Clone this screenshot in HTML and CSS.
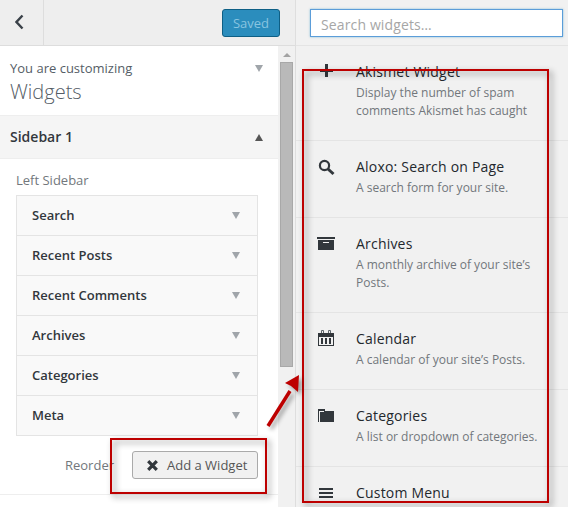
FILE: index.html
```html
<!DOCTYPE html>
<html lang="en">
<head>
<meta charset="utf-8">
<title>Widgets</title>
<link rel="stylesheet" href="styles.css">
</head>
<body>
<div class="app">
  <aside class="side">
    <header class="top">
      <button class="back" aria-label="Back">
        <svg width="12" height="16" viewBox="0 0 12 16"><path d="M7.5 1.500 1.500 8l6 6.500" fill="none" stroke="#3a4149" stroke-width="2.400"/></svg>
      </button>
      <button class="saved">Saved</button>
    </header>
    <div class="scrollwrap">
      <div class="content">
        <section class="info">
          <div class="info-text">
            <div class="info-small">You are customizing</div>
            <div class="info-big">Widgets</div>
          </div>
          <span class="tri tri-down"></span>
        </section>
        <section class="sec-head">
          <h3>Sidebar 1</h3>
          <span class="tri tri-up"></span>
        </section>
        <section class="sec-body">
          <p class="sec-desc">Left Sidebar</p>
          <ul class="wlist">
            <li><span class="wname">Search</span><span class="tri tri-down"></span></li>
            <li><span class="wname">Recent Posts</span><span class="tri tri-down"></span></li>
            <li><span class="wname">Recent Comments</span><span class="tri tri-down"></span></li>
            <li><span class="wname">Archives</span><span class="tri tri-down"></span></li>
            <li><span class="wname">Categories</span><span class="tri tri-down"></span></li>
            <li><span class="wname">Meta</span><span class="tri tri-down"></span></li>
          </ul>
          <div class="actions">
            <span class="reorder">Reorder</span>
            <button class="add">
              <svg width="13" height="13" viewBox="0 0 13 13"><path d="M2.200 2.200l8.600 8.600M10.800 2.200l-8.600 8.600" stroke="#32373c" stroke-width="3.200" fill="none"/></svg>
              Add a Widget
            </button>
          </div>
        </section>
      </div>
      <div class="scrollbar">
        <span class="sb-up"></span>
        <span class="sb-thumb"></span>
      </div>
    </div>
  </aside>
  <main class="avail">
    <div class="search-row"><input class="search" placeholder="Search widgets…"></div>
    <div class="item">
      <svg class="ico" width="20" height="24" viewBox="0 0 20 24"><path d="M9 3h3v5h5v3h-5v5H9v-5H4V8h5z" fill="#32373c"/></svg>
      <div class="item-text"><h4>Akismet Widget</h4><p>Display the number of spam comments Akismet has caught</p></div>
    </div>
    <div class="item">
      <svg class="ico" width="20" height="24" viewBox="0 0 20 24"><circle cx="8.500" cy="9.500" r="4.600" fill="none" stroke="#32373c" stroke-width="2.200"/><path d="M12 13l5.500 5" stroke="#32373c" stroke-width="3"/></svg>
      <div class="item-text"><h4>Aloxo: Search on Page</h4><p>A search form for your site.</p></div>
    </div>
    <div class="item">
      <svg class="ico" width="20" height="24" viewBox="0 0 20 24"><path d="M1 4h18v2H1zM2 7h16v10H2zM7 9v1h6V9z" fill="#32373c" fill-rule="evenodd"/></svg>
      <div class="item-text"><h4>Archives</h4><p>A monthly archive of your site’s Posts.</p></div>
    </div>
    <div class="item">
      <svg class="ico" width="20" height="24" viewBox="0 0 20 24"><path d="M2 5h16v13H2zM3 9v8h14V9zM5 10h2v6H5zM9 10h2v6H9zM13 10h2v6h-2z" fill="#32373c" fill-rule="evenodd"/><path d="M5.500 5V2.500h2V5M12.500 5V2.500h2V5" fill="none" stroke="#5f666c"/></svg>
      <div class="item-text"><h4>Calendar</h4><p>A calendar of your site’s Posts.</p></div>
    </div>
    <div class="item">
      <svg class="ico" width="20" height="24" viewBox="0 0 20 24"><path d="M2 4h7v2h9v11H2zM3 6v11h1V7h4V6z" fill="#32373c" fill-rule="evenodd"/></svg>
      <div class="item-text"><h4>Categories</h4><p>A list or dropdown of categories.</p></div>
    </div>
    <div class="item">
      <svg class="ico" width="20" height="24" viewBox="0 0 20 24"><path d="M3 6h14v2H3zM3 10h14v2H3zM3 14h14v2H3z" fill="#32373c"/></svg>
      <div class="item-text"><h4>Custom Menu</h4></div>
    </div>
  </main>
</div>
<div class="note note-list"></div>
<div class="note note-add"></div>
<svg class="arrow" width="50" height="70" viewBox="0 0 50 70"><path d="M2 57 24 22" class="arrow-line"/><path d="M33 6 19 14 25 17 32 23z" class="arrow-head"/></svg>
</body>
</html>
```
FILE: styles.css
```css
* { box-sizing: border-box; }
html, body { margin: 0; height: 507px; overflow: hidden; }
body { font-family: "Open Sans", sans-serif; color: #32373c; position: relative; background: #f1f1f1; }
.app { display: flex; height: 507px; overflow: hidden; }
.side { width: 296px; flex: none; border-right: 1px solid #dedede; display: flex; flex-direction: column; background: #eee; }
.top { height: 46px; flex: none; display: flex; justify-content: space-between; align-items: flex-start; border-bottom: 1px solid #ddd; padding-right: 15px; }
.back { width: 44px; height: 45px; border: 0; border-right: 1px solid #ddd; background: transparent; padding: 0 1px 2px 0; display: flex; align-items: center; justify-content: center; }
.saved { margin-top: 9px; width: 58px; height: 28px; border: 1px solid #0e5f85; border-radius: 3px; background: #2b8dbd; color: #88c4e0; font: 13px "Open Sans", sans-serif; padding: 0; }
.scrollwrap { flex: 1; display: flex; min-height: 0; }
.content { width: 278px; flex: none; background: #fff; }
.info { height: 70px; padding: 13px 16px 0 10px; display: flex; justify-content: space-between; border-bottom: 1px solid #eee; }
.info-small { font-size: 13px; line-height: 18px; color: #555d66; }
.info-big { font-size: 20px; font-weight: 300; line-height: 28px; margin-top: 1px; color: #555d66; }
.tri { display: block; width: 0; height: 0; border-left: 4.500px solid transparent; border-right: 4.500px solid transparent; }
.tri-down { border-top: 7px solid #a0a5aa; }
.info .tri { margin-top: 6px; margin-right: -1px; }
.sec-head { height: 43px; padding: 0 16px 0 10px; display: flex; justify-content: space-between; align-items: center; background: #f5f5f5; border-bottom: 1px solid #eee; }
.sec-head h3 { margin: 0 0 2px; font-size: 14px; font-weight: 600; color: #32373c; }
.tri-up { border-bottom: 7px solid #555; margin-right: -1px; }
.sec-body { padding: 0 20px 0 16px; height: 336px; border-bottom: 1px solid #eee; }
.sec-desc { margin: 0; padding-top: 11px; height: 36px; line-height: 20px; font-size: 13px; color: #72777c; }
.wlist { list-style: none; margin: 0; padding: 0; border: 1px solid #e4e4e4; border-bottom: 0; }
.wlist li { height: 40px; display: flex; align-items: center; justify-content: space-between; padding: 0 17px 0 15px; background: #f9f9f9; border-bottom: 1px solid #e4e4e4; font-size: 13px; font-weight: 600; color: #32373c; }
.wname { margin-bottom: 2px; }
.actions { display: flex; justify-content: flex-end; align-items: center; margin-top: 15px; height: 28px; gap: 18px; }
.reorder { font-size: 13px; color: #72777c; }
.add { width: 126px; height: 28px; border: 1px solid #aaa; border-radius: 3px; background: #f1f1f1; display: flex; align-items: center; gap: 8px; padding: 0 0 0 13px; font: 13px "Open Sans", sans-serif; color: #555; }
.scrollbar { width: 17px; flex: none; background: #f1f1f1; padding: 2px 2px 0; display: flex; flex-direction: column; align-items: center; }
.sb-up { width: 0; height: 0; border-left: 4px solid transparent; border-right: 4px solid transparent; border-bottom: 4px solid #a3a3a3; margin-top: 5px; }
.sb-thumb { width: 13px; height: 305px; background: #b9b9b9; border: 1px solid #a8a8a8; margin-top: 5px; }
.avail { flex: 1; background: #f1f1f1; overflow: hidden; height: 507px; }
.search-row { height: 46px; padding: 9px 5px 0 14px; border-bottom: 1px solid #e4e4e4; }
.search { display: block; width: 100%; height: 28px; border: 1px solid #5b9dd9; background: #fff; padding: 2px 10px 0; font: 14px "Open Sans", sans-serif; letter-spacing: .13px; box-shadow: 0 0 2px rgba(30,140,190,.5); outline: 0; }
.search::placeholder { color: #a6a6a6; opacity: 1; }
.item { display: flex; padding: 14px 0 20px 20px; border-bottom: 1px solid #e4e4e4; gap: 20px; }
.ico { flex: none; margin-top: 1px; }
.item-text { width: 195px; flex: none; }
.item h4 { margin: 0; font-size: 14px; font-weight: 400; line-height: 24px; letter-spacing: .2px; color: #23282d; }
.item p { margin: 0; font-size: 12px; line-height: 18px; color: #72777c; }
.note { position: absolute; border: 2px solid #bd0000; filter: drop-shadow(3px 3px 3px rgba(0,0,0,.45)); }
.note-list { left: 302px; top: 69px; width: 247px; height: 434px; }
.note-add { left: 110px; top: 438px; width: 157px; height: 56px; }
.arrow { position: absolute; left: 266px; top: 369px; overflow: visible; filter: drop-shadow(3px 3px 2px rgba(0,0,0,.35)); }
.arrow-line { stroke: #bd0000; stroke-width: 3.500; fill: none; }
.arrow-head { fill: #bd0000; }
```
